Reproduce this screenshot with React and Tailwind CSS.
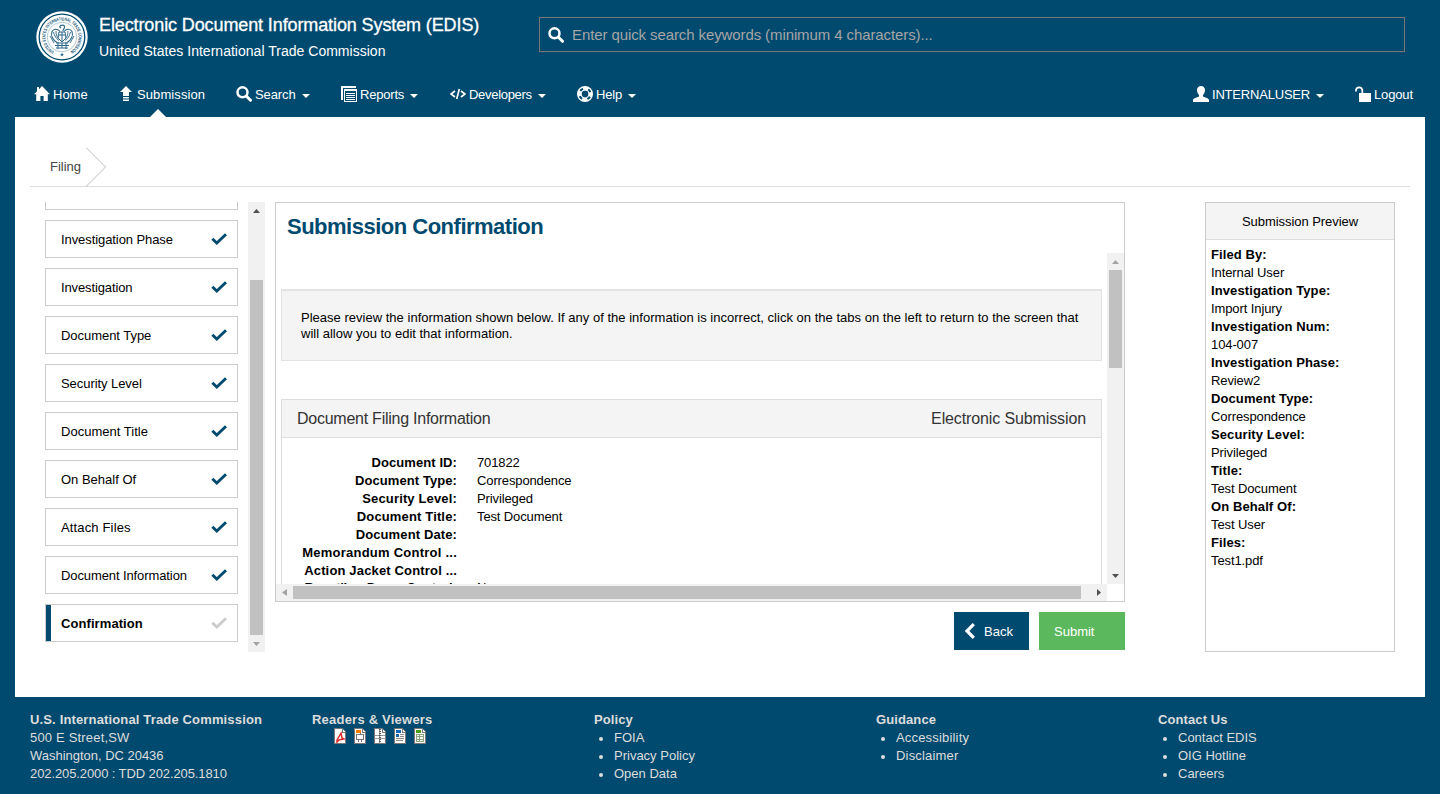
import React from "react";

const HomeIcon = () => (
  <svg className="h-4 w-4 shrink-0" viewBox="0 0 16 16" fill="currentColor"><path d="M8 0 16 8.300h-2.200V15H9.600V10H6.400v5H2.200V8.300H0L3 5.200V1h2v2.200z" /></svg>
);
const UploadIcon = () => (
  <svg className="h-4 w-3 shrink-0" viewBox="0 0 12 16" fill="currentColor"><path d="M6 0 12 6H9v4H3V6H0zM3 11h6v1.500H3zM3 13.500h6V15H3z" /></svg>
);
const SearchIcon = () => (
  <svg className="h-4 w-4 shrink-0" viewBox="0 0 16 16" fill="none" stroke="currentColor"><circle cx="6.500" cy="6.300" r="5" strokeWidth="2.500" /><path d="m10.500 10.300 4 4" strokeWidth="3" strokeLinecap="round" /></svg>
);
const ReportsIcon = () => (
  <svg className="h-4 w-4 shrink-0" viewBox="0 0 16 16" fill="none" stroke="currentColor" shapeRendering="crispEdges"><path d="M1 14V1h14" strokeWidth="2" /><path d="M3.500 3.500h12v12h-12z" /><path d="M4 4.500h11M5 7.500h9M5 9.500h9M5 11.500h9M5 13.500h9" /></svg>
);
const CodeIcon = () => (
  <svg className="h-4 w-4 shrink-0" viewBox="0 0 16 16" fill="none" stroke="currentColor" strokeWidth="1.700"><path d="M5 5 1 8l4 3M11 5l4 3-4 3M9.300 3 6.700 13" /></svg>
);
const HelpIcon = () => (
  <svg className="h-4 w-4 shrink-0" viewBox="0 0 16 16" fill="none" stroke="currentColor"><circle cx="8" cy="8" r="7.300" strokeWidth="1.400" /><circle cx="8" cy="8" r="5.500" strokeWidth="3.500" strokeDasharray="5.400 3.239" strokeDashoffset="2.700" /><circle cx="8" cy="8" r="4" strokeWidth="1.200" /></svg>
);
const UserIcon = () => (
  <svg className="h-4 w-4 shrink-0" viewBox="0 0 16 16" fill="currentColor"><path d="M8 0c2.500 0 4 1.800 4 4 0 2.300-.8 4-2 5v1.400c1 .8 6 1.600 6 3.600v2H0v-2c0-2 5-2.800 6-3.600V9C4.800 8 4 6.300 4 4c0-2.200 1.500-4 4-4z" /></svg>
);
const UnlockIcon = () => (
  <svg className="h-4 w-4 shrink-0" viewBox="0 0 16 16"><path d="M1 5.500V4a3.200 3.200 0 0 1 6.300 0v3.500" fill="none" stroke="currentColor" strokeWidth="1.700" /><path d="M4 7h12v9H4z" fill="currentColor" /></svg>
);
const Caret = () => (
  <svg className="mt-[3px] h-1 w-2 shrink-0" viewBox="0 0 8 4" fill="currentColor"><path d="M0 0h8L4 4z" /></svg>
);
const Check = () => (
  <svg className="h-4 w-4" viewBox="0 0 16 16" fill="none" stroke="currentColor" strokeWidth="2.900"><path d="m1.300 7.700 4.500 4.300L15 3.200" /></svg>
);

const Seal = () => (
  <svg className="h-[52px] w-[52px] shrink-0" viewBox="0 0 52 52">
    <defs><path id="ring" d="M18 40.400A16.500 16.500 0 1 1 34 40.400" /></defs>
    <circle cx="26" cy="26" r="25.700" fill="#fff" />
    <circle cx="26" cy="26" r="22.800" fill="none" stroke="#004a6f" strokeWidth="1.300" />
    <circle cx="26" cy="26" r="14.800" fill="none" stroke="#8fb2c2" strokeWidth=".7" />
    <text fill="#0f5478" fontSize="4.600" fontWeight="bold" className="font-['Liberation_Sans',sans-serif]">
      <textPath href="#ring" textLength="86" lengthAdjust="spacingAndGlyphs">UNITED STATES INTERNATIONAL TRADE COMMISSION</textPath>
    </text>
    <path d="m26 41.500.6 1.400h1.400l-1.100 1 .4 1.500-1.300-.8-1.300.8.4-1.500-1.100-1h1.400z" fill="#34708f" />
    <g fill="none" stroke="#2b6788" strokeWidth="1.100">
      <path d="M23.500 16c1-2.500 5-2.500 5 0s-1.500 1.500-1.500 4M23.500 16l1.500 1" />
      <path d="M24 20.500c-2.500-3-6.500-3-8 0-1.500 4 .5 8.500 5 11M28 20.500c2.500-3 6.500-3 8 0 1.500 4-.5 8.500-5 11" />
      <path d="M17.500 21c1 4 2.500 6.500 5.500 8.500M34.500 21c-1 4-2.500 6.500-5.500 8.500M20 20c0 4 1 6.500 3.500 8.500M32 20c0 4-1 6.500-3.500 8.500M14 25l4 7M38 25l-4 7" strokeWidth=".9" />
      <path d="M23 21h6l1 6-4 4-4-4zM26 21v9M23 24h6M20 32h12M19 34.500h14M20 37h12M22 31v7M30 31v7M26 32v5" strokeWidth="1" />
    </g>
  </svg>
);

const navItems = [
  { label: "Home", Icon: HomeIcon, box: "w-[86px] gap-[3px]" },
  { label: "Submission", Icon: UploadIcon, box: "w-[116px] gap-[5px]", active: true, tracking: "tracking-[0.1px]" },
  { label: "Search", Icon: SearchIcon, box: "w-[105px] gap-[3px]", caret: true, tracking: "tracking-[-0.1px]" },
  { label: "Reports", Icon: ReportsIcon, box: "w-[109px] gap-[3px]", caret: true, tracking: "tracking-[-0.2px]" },
  { label: "Developers", Icon: CodeIcon, box: "w-[127px] gap-[3px]", caret: true, tracking: "tracking-[-0.3px]" },
  { label: "Help", Icon: HelpIcon, box: "w-[80px] gap-[3px]", caret: true, tracking: "tracking-[-0.2px]" },
];

function NavItem({ label, Icon, box, caret, active, tracking = "" }) {
  return (
    <div className={`relative flex h-8 items-center ${box}`}>
      <Icon />
      <span className={`pt-[2px] ${tracking}`}>{label}</span>
      {caret && <span className="ml-[3px] flex"><Caret /></span>}
      {active && (
        <svg className="absolute -bottom-[7px] left-[30px] h-2 w-4" viewBox="0 0 16 8" fill="#fff"><path d="M0 8 8 0l8 8z" /></svg>
      )}
    </div>
  );
}

const steps = [
  { label: "Investigation Phase", tracking: "tracking-[-0.08px]" },
  { label: "Investigation", tracking: "tracking-[-0.12px]" },
  { label: "Document Type", tracking: "tracking-[-0.04px]" },
  { label: "Security Level", tracking: "tracking-[-0.06px]" },
  { label: "Document Title", tracking: "tracking-[0.02px]" },
  { label: "On Behalf Of", tracking: "tracking-normal" },
  { label: "Attach Files", tracking: "tracking-[0.15px]" },
  { label: "Document Information", tracking: "tracking-[-0.1px]" },
];

const details = [
  ["Document ID:", "701822", "tracking-[0.08px]"],
  ["Document Type:", "Correspondence", "tracking-[0.08px]"],
  ["Security Level:", "Privileged", "tracking-[0.15px]"],
  ["Document Title:", "Test Document", "tracking-[0.15px]"],
  ["Document Date:", "", "tracking-[0.12px]"],
  ["Memorandum Control ...", "", "tracking-[0.24px]"],
  ["Action Jacket Control ...", "", "tracking-[0.16px]"],
];

const preview = [
  ["Filed By:", "Internal User"],
  ["Investigation Type:", "Import Injury"],
  ["Investigation Num:", "104-007"],
  ["Investigation Phase:", "Review2"],
  ["Document Type:", "Correspondence"],
  ["Security Level:", "Privileged"],
  ["Title:", "Test Document"],
  ["On Behalf Of:", "Test User"],
  ["Files:", "Test1.pdf"],
];

const footerLists = [
  ["Policy", ["FOIA", "Privacy Policy", "Open Data"], "tracking-normal"],
  ["Guidance", ["Accessibility", "Disclaimer"], "tracking-[0.18px]"],
  ["Contact Us", ["Contact EDIS", "OIG Hotline", "Careers"], "tracking-normal"],
];

function Arrow({ dir, off }) {
  const paths = { up: "M5 11h7L8.500 7z", down: "M5 7h7l-3.500 4z", left: "M11 5v7L6 8.500z", right: "M7 5v7l4-3.500z" };
  return (
    <svg className="h-[17px] w-[17px] shrink-0" viewBox="0 0 17 17" fill={off ? "#a3a3a3" : "#505050"}><path d={paths[dir]} /></svg>
  );
}

function FileIcon({ children }) {
  return (
    <svg className="h-4 w-3" viewBox="0 0 12 16" shapeRendering="crispEdges">
      <path d="M.5.500h8l3 3v12H.500z" fill="#fff" stroke="#777" />
      <path d="M8.500 1v3H11" fill="none" stroke="#777" />
      {children}
    </svg>
  );
}

function Step({ label, current, tracking = "" }) {
  return (
    <div className={`flex h-[38px] shrink-0 items-center justify-between border border-[#ccc] pr-[10px] ${current ? "font-bold" : ""}`}>
      <div className="flex h-full items-center">
        <span className={`h-full w-[5px] ${current ? "bg-[#004a6f]" : ""}`} />
        <span className={`pl-[10px] pt-[2px] ${tracking}`}>{label}</span>
      </div>
      <span className={current ? "text-[#ccc]" : "text-[#004a6f]"}><Check /></span>
    </div>
  );
}

export default function App() {
  return (
    <div className="h-[794px] w-[1440px] overflow-hidden bg-[#004a6f] font-['Liberation_Sans',Arial,sans-serif] text-[13px] leading-[18px] text-black">
      <header className="h-[117px] text-white">
        <div className="flex h-[78px] pl-9 pt-[11px]">
          <Seal />
          <div className="ml-[11px] w-[440px] whitespace-nowrap">
            <h1 className="mt-[3px] text-[18px] leading-[22px] tracking-[-0.11px] [-webkit-text-stroke:0.3px_white]">Electronic Document Information System (EDIS)</h1>
            <p className="mt-[6px] text-[14px] leading-[18px] tracking-[0.02px]">United States International Trade Commission</p>
          </div>
          <div className="mt-[6px] flex h-[35px] w-[866px] items-center gap-2 border border-[#777] pl-2">
            <SearchIcon />
            <span className="text-[15px] tracking-[-0.1px] text-[#a5a5a5]">Enter quick search keywords (minimum 4 characters)...</span>
          </div>
        </div>
        <nav className="flex h-8 pl-[34px]">
          {navItems.map((item) => <NavItem key={item.label} {...item} />)}
          <div className="ml-auto flex">
            <NavItem label="INTERNALUSER" Icon={UserIcon} box="w-[162px] gap-[3px]" tracking="tracking-[-0.2px]" caret />
            <NavItem label="Logout" Icon={UnlockIcon} box="w-[85px] gap-[3px]" tracking="tracking-[-0.15px]" />
          </div>
        </nav>
      </header>

      <main className="mx-[15px] h-[580px] bg-white px-[15px] pt-[30px]">
        <div className="flex h-10 items-center border-b border-[#ddd] pl-5 text-[#444]">
          <span>Filing</span>
          <svg className="ml-[5px] h-10 w-[21px]" viewBox="0 0 21 40" fill="none" stroke="#bbb"><path d="M0 0.500 19.500 20 0 39.500" /></svg>
        </div>
        <div className="mt-[15px] flex h-[450px] items-start pl-[15px]">
          <aside className="flex h-[450px] w-[220px] justify-between overflow-hidden">
            <div className="flex h-full w-[193px] flex-col gap-[10px]">
              <div className="h-2 shrink-0 border border-t-0 border-[#ccc]" />
              {steps.map((s) => <Step key={s.label} {...s} />)}
              <Step label="Confirmation" tracking="tracking-[0.08px]" current />
            </div>
            <div className="flex w-[17px] flex-col bg-[#f1f1f1]">
              <Arrow dir="up" />
              <div className="mx-[2px] mt-[61px] h-[355px] bg-[#c1c1c1]" />
              <Arrow dir="down" off />
            </div>
          </aside>

          <section className="ml-[10px] w-[850px]">
            <div className="h-[400px] border border-[#ccc]">
              <h2 className="h-[50px] pl-[11px] pt-[10px] text-[22px] font-bold leading-[28px] tracking-[-0.5px] text-[#004a6f]">Submission Confirmation</h2>
              <div className="flex h-[331px]">
                <div className="h-full w-[831px] overflow-hidden px-[5px] pt-9">
                  <div className="h-[72px] border border-t-2 border-[#e3e3e3] bg-[#f4f4f4] px-[19px] pt-[19px] leading-4">
                    <p className="whitespace-nowrap tracking-[0.015px]">Please review the information shown below. If any of the information is incorrect, click on the tabs on the left to return to the screen that</p>
                    <p>will allow you to edit that information.</p>
                  </div>
                  <div className="mt-[38px] border border-[#ddd]">
                    <div className="flex h-[38px] items-center justify-between border-b border-[#ddd] bg-[#f4f4f4] px-[15px] text-[16px] text-[#333]">
                      <span className="tracking-[-0.25px]">Document Filing Information</span>
                      <span className="tracking-[-0.12px]">Electronic Submission</span>
                    </div>
                    <div className="pt-4">
                      {details.map(([k, v, tracking]) => (
                        <div key={k} className="flex h-[18px] gap-5 whitespace-nowrap">
                          <b className={`w-[175px] text-right ${tracking}`}>{k}</b>
                          <span className="tracking-[-0.12px]">{v}</span>
                        </div>
                      ))}
                      <div className="-mt-px flex h-[18px] gap-5 whitespace-nowrap">
                        <b className="w-[175px] text-right">Recpt'ing Docu. Control:</b>
                        <span>No</span>
                      </div>
                    </div>
                  </div>
                </div>
                <div className="flex w-[17px] flex-col bg-[#f1f1f1]">
                  <Arrow dir="up" off />
                  <div className="mx-[2px] h-[98px] bg-[#c1c1c1]" />
                  <span className="mt-auto h-[17px]"><Arrow dir="down" /></span>
                </div>
              </div>
              <div className="flex h-[17px] w-[831px] items-center bg-[#f1f1f1]">
                <Arrow dir="left" off />
                <div className="h-[13px] w-[788px] bg-[#c1c1c1]" />
                <span className="ml-auto"><Arrow dir="right" /></span>
              </div>
            </div>
            <div className="mt-[10px] flex justify-end gap-[10px] text-white">
              <button className="flex h-[38px] w-[75px] items-center bg-[#004a6f] pl-2">
                <svg className="h-4 w-4" viewBox="0 0 16 16" fill="none" stroke="currentColor" strokeWidth="3.200"><path d="M11.800 1.200 5 8l6.800 6.800" /></svg>
                <span className="pl-[6px] pt-[2px]">Back</span>
              </button>
              <button className="h-[38px] w-[86px] bg-[#5cb85c] pl-[15px] pt-[2px] text-left">Submit</button>
            </div>
          </section>

          <aside className="ml-20 h-[450px] w-[190px] border border-[#ccc]">
            <div className="flex h-[37px] items-center justify-center border-b border-[#ddd] bg-[#f4f4f4] pt-[2px] tracking-[-0.05px]">Submission Preview</div>
            <div className="pl-[5px] pt-[6px]">
              {preview.map(([k, v]) => (
                <div key={k}>
                  <b className="block tracking-[0.1px]">{k}</b>
                  <span className="block tracking-[-0.1px]">{v}</span>
                </div>
              ))}
            </div>
          </aside>
        </div>
      </main>

      <footer className="grid grid-cols-[282px_282px_282px_282px_282px] pl-[30px] pt-[14px] text-[#ddd]">
        <div>
          <b className="block tracking-[0.15px]">U.S. International Trade Commission</b>
          <p className="tracking-[0.18px]">500 E Street,SW</p>
          <p className="tracking-[-0.02px]">Washington, DC 20436</p>
          <p className="tracking-[-0.1px]">202.205.2000 : TDD 202.205.1810</p>
        </div>
        <div>
          <b className="block tracking-[0.22px]">Readers &amp; Viewers</b>
          <div className="-mt-px flex gap-2 pl-[22px]">
            <FileIcon><path d="M3 12 7 5l1 5 2 1-5 1-2 2z" fill="none" stroke="#e02c2c" strokeWidth="1.500" shapeRendering="auto" /></FileIcon>
            <FileIcon><path d="M2 2h5v3H2z" fill="#f57c00" /><path d="M2.500 6.500h7v5h-7zM4 14l1-2M8 14l-1-2M6 5v1" fill="none" stroke="#777" /></FileIcon>
            <FileIcon><path d="M5.500 1v14M1 7.500h10M1 10.500h10" fill="none" stroke="#999" /><path d="M6 1v14" stroke="#555" strokeWidth="2" strokeDasharray="1 1" /></FileIcon>
            <FileIcon><path d="M2 2h5v3H2zM2 6h3v3H2z" fill="#1565b5" /><path d="M6 6.500h4M6 8.500h4M2 10.500h8M2 12.500h7" stroke="#888" /></FileIcon>
            <FileIcon><path d="M2 2h5v3H2z" fill="#4a9c12" /><path d="M2.500 6.500h7v7h-7zM2.500 8.500h7M2.500 11.500h7M5.500 6.500v7" fill="none" stroke="#8aa37c" /></FileIcon>
          </div>
        </div>
        {footerLists.map(([title, links, tracking]) => (
          <div key={title}>
            <b className="block tracking-[0.1px]">{title}</b>
            {links.map((l) => (
              <div key={l} className="flex h-[18px] items-center">
                <span className="ml-[5px] mt-px h-1 w-1 rounded-full bg-[#ddd]" />
                <span className={`ml-[11px] ${tracking}`}>{l}</span>
              </div>
            ))}
          </div>
        ))}
      </footer>
    </div>
  );
}
